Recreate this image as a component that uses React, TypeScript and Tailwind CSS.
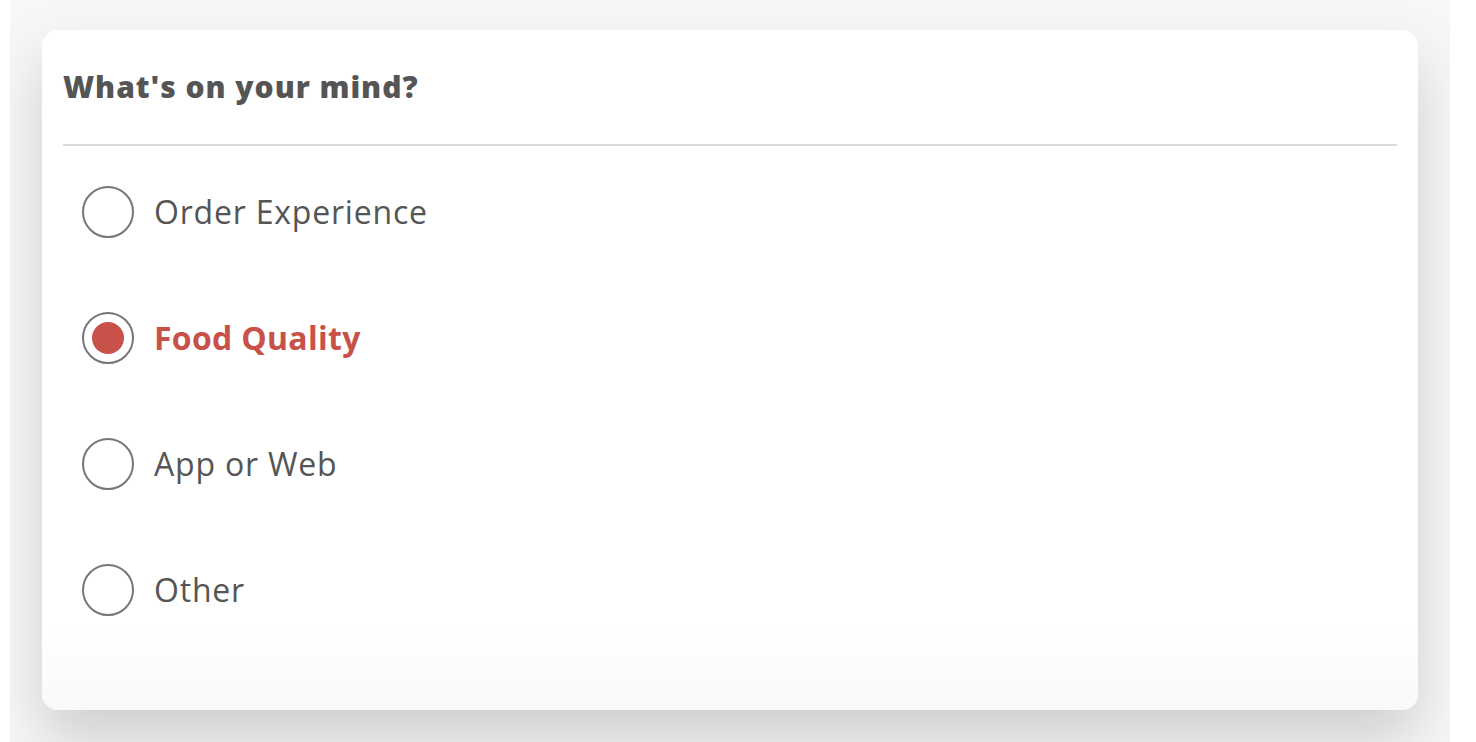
import React from "react";

const options = [
  { label: "Order Experience", selected: false },
  { label: "Food Quality", selected: true },
  { label: "App or Web", selected: false },
  { label: "Other", selected: false },
];

export default function App() {
  return (
    <div
      className="w-[1476px] h-[742px] bg-white overflow-hidden"
      style={{ fontFamily: '"Open Sans", "Noto Sans", sans-serif' }}
    >
      <div className="ml-[10px] w-[1440px] h-[742px] bg-[#f7f7f7] overflow-hidden pt-[30px] px-[32px]">
        <div className="h-[680px] rounded-[16px] bg-gradient-to-b from-white from-[88%] to-[#f9f9f9] shadow-[0_30px_60px_rgba(0,0,0,0.17)] px-[21px]">
          <div className="h-[116px] flex items-center border-b-2 border-[#d9d9d9]">
            <h1 className="text-[30px] font-extrabold text-[#555555] tracking-[0.95px] leading-none">
              What's on your mind?
            </h1>
          </div>
          <div className="flex flex-col pt-[40px] pl-[19px] gap-[74px]">
            {options.map((o) => (
              <label key={o.label} className="flex items-center h-[52px] gap-[20px]">
                <span className="w-[52px] h-[52px] rounded-full border-2 border-[#777777] flex items-center justify-center shrink-0">
                  {o.selected && (
                    <span className="w-[32px] h-[32px] rounded-full bg-[#c8524a]" />
                  )}
                </span>
                <span
                  className={
                    o.selected
                      ? "text-[32px] font-bold text-[#c8524a] leading-none tracking-[0.3px]"
                      : "text-[32px] text-[#555555] leading-none tracking-[0.8px]"
                  }
                >
                  {o.label}
                </span>
              </label>
            ))}
          </div>
        </div>
      </div>
    </div>
  );
}
